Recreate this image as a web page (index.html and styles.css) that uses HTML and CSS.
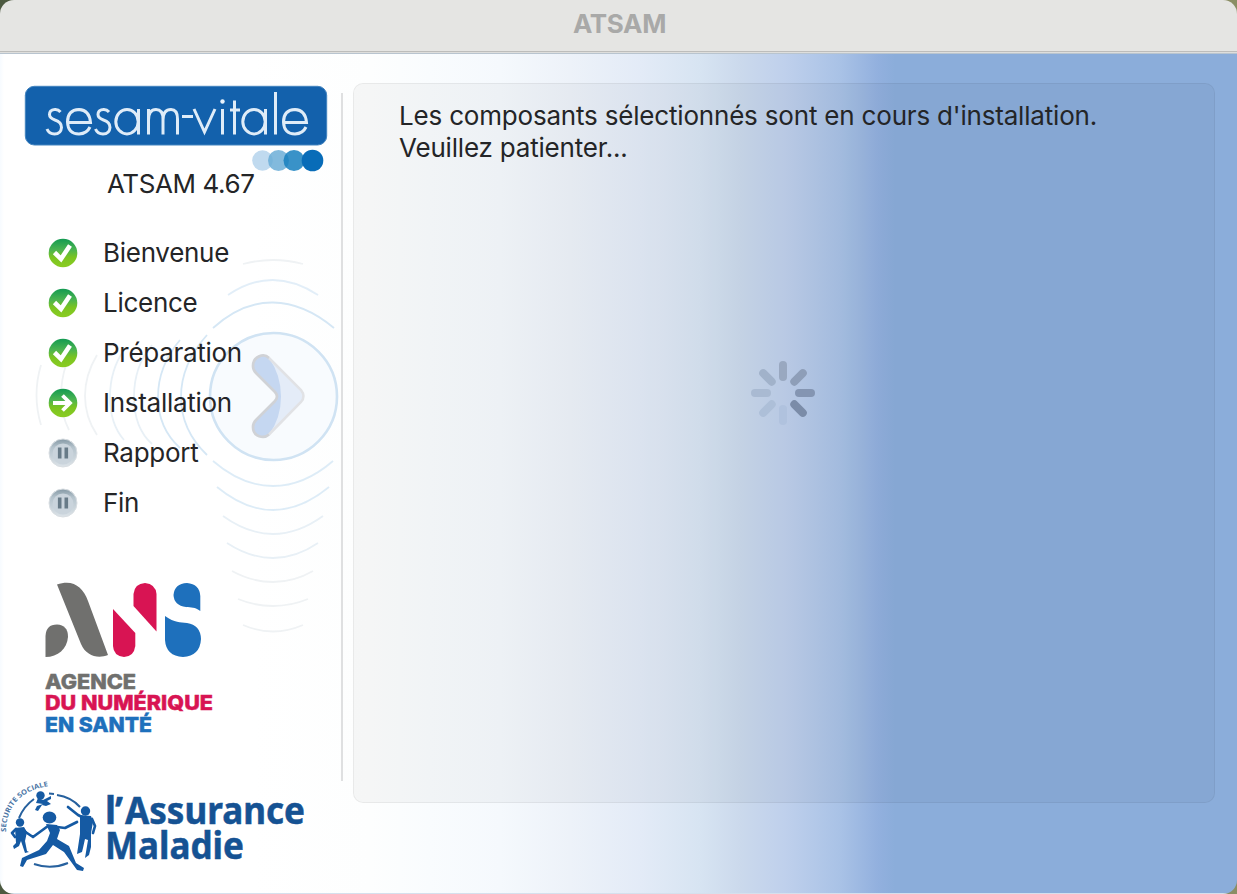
FILE: index.html
```html
<!DOCTYPE html>
<html lang="fr">
<head>
<meta charset="utf-8">
<title>ATSAM</title>
<link rel="stylesheet" href="styles.css">
</head>
<body>
<div class="window">
  <header class="titlebar">ATSAM</header>
  <main class="content">
    <svg class="waves" width="342" height="420" viewBox="0 240 342 420" fill="none" stroke-width="1.8">
      <circle cx="273.500" cy="396.500" r="63.500" fill="#f8fbfe" stroke="#d0e3f3" stroke-width="2.600"/>
      <g stroke="#d5e7f5">
        <path d="M213 328Q242 302 273 302.500T334 328"/>
        <path d="M207 335Q181 364 181 397T207 455"/>
        <path d="M180 340Q158 366 158 397T180 448"/>
        <path d="M228 295Q272 265 318 295" opacity=".7"/>
        <path d="M213 461Q242 486 273 486T333 461" opacity=".8"/>
        <path d="M217 487Q245 510 273 510T329 487" opacity=".8"/>
      </g>
      <g stroke="#e8f0f6">
        <path d="M152 345Q134 366 134 397T152 444"/>
        <path d="M124 350Q110 370 110 397T124 440"/>
        <path d="M223 516Q248 534 273 534T323 516"/>
        <path d="M227 543Q250 558 273 558T318 543"/>
      </g>
      <g stroke="#eff2f4">
        <path d="M97 355Q85 375 85 396T97 435"/>
        <path d="M66 365Q61 380 61 397T69 430"/>
        <path d="M41 365Q32 395 41 425"/>
        <path d="M243 264Q273 256 303 264"/>
        <path d="M232 571Q252 582 273 582T313 571"/>
        <path d="M238 599Q255 606 273 606T308 599"/>
        <path d="M243 625Q273 638 303 625"/>
      </g>
      <path d="M269 358L301 390Q306 396.500 301 402L269 434.500C264 439 253 437 253 427Q253 423 256 420L275 401Q279 396.500 275 392L256 373Q253 370 253 366C253 356 264 353 269 358Z" fill="#e4ecf8"/>
      <path d="M269 358Q281 375 281 396.500Q281 418 269 434.500C264 439 253 437 253 427Q253 423 256 420L275 401Q279 396.500 275 392L256 373Q253 370 253 366C253 356 264 353 269 358Z" fill="#c5d7f1"/>
      <path d="M269 358L301 390Q306 396.500 301 402L269 434.500" stroke="#e1e2e5" stroke-width="2.500"/>
      <path d="M269 434.500C264 439 253 437 253 427Q253 423 256 420L275 401Q279 396.500 275 392L256 373Q253 370 253 366C253 356 264 353 269 358" stroke="#d0d2d6" stroke-width="2.700"/>
    </svg>

    <aside class="sidebar">
      <svg class="sesam" width="304" height="90" viewBox="24 84 304 90">
        <rect x="25.300" y="86.300" width="301.400" height="58.700" rx="9" fill="#1361ac" stroke="#4384bf" stroke-width="1"/>
        <g fill="none" stroke="#dfecf8" stroke-width="3" stroke-linecap="butt">
          <path d="M60.500 112Q58 109 54.500 109.500Q49.500 110 49.500 114.500Q49.500 118 55 120Q61.500 122 61.500 127.500Q61 134 54.500 134Q49 134 47 129"/>
          <path d="M67.500 122.500H90.500Q89.500 110 79 109.500Q67.500 110 67.500 122Q68 134 79 134Q87 133.500 90 127"/>
          <path d="M109 112Q106.500 109 103 109.500Q98 110 98 114.500Q98 118 103.500 120Q110 122 110 127.500Q109.500 134 103 134Q97.500 134 95.500 129"/>
          <ellipse cx="127" cy="121.700" rx="11.200" ry="12.200"/><path d="M138.500 109V134.500"/>
          <path d="M148.500 109V134.500M148.500 120Q148.500 109.500 156 109.500Q163 109.500 163 119V134.500M163 120Q163 109.500 171 109.500Q177.500 109.500 177.500 119V134.500"/>
          <path d="M182 116.500H193M194 109L204.500 132L215 109M222.500 109V134.500M234.500 100.500V134.500M230 110H240"/>
          <ellipse cx="254" cy="121.700" rx="11.200" ry="12.200"/><path d="M265.500 109V134.500M275.500 92V134.500"/>
          <path d="M283.500 122.500H306.500Q305.500 110 295 109.500Q283.500 110 283.500 122Q284 134 295 134Q303 133.500 306 127"/>
        </g>
        <circle cx="222.500" cy="101.500" r="2.200" fill="#e9f2fb"/>
        <circle cx="262.500" cy="160.500" r="10.300" fill="#c0daef"/>
        <circle cx="278.500" cy="160.500" r="10.500" fill="#67abd6" opacity=".82"/>
        <circle cx="294" cy="160.500" r="10.500" fill="#167fbe" opacity=".85"/>
        <circle cx="312.500" cy="160.500" r="10.800" fill="#086cb8"/>
      </svg>
      <div class="version">ATSAM 4.67</div>

      <ul class="steps">
        <li class="step"><svg class="status" viewBox="0 0 30 30"><use href="#done"/></svg><span>Bienvenue</span></li>
        <li class="step"><svg class="status" viewBox="0 0 30 30"><use href="#done"/></svg><span>Licence</span></li>
        <li class="step"><svg class="status" viewBox="0 0 30 30"><use href="#done"/></svg><span>Préparation</span></li>
        <li class="step"><svg class="status" viewBox="0 0 30 30"><use href="#current"/></svg><span>Installation</span></li>
        <li class="step"><svg class="status" viewBox="0 0 30 30"><use href="#waiting"/></svg><span>Rapport</span></li>
        <li class="step"><svg class="status" viewBox="0 0 30 30"><use href="#waiting"/></svg><span>Fin</span></li>
      </ul>

      <svg class="ans" width="180" height="160" viewBox="40 578 180 160">
        <path d="M57 584.500C73 579 83 587 88 601L108 655C98 659 86 656 81 644Z" fill="#70706e"/>
        <path d="M45.500 657V636Q46 624.500 57 624.500Q68 625 68 637C67 649 58 657 45.500 657Z" fill="#70706e"/>
        <path d="M113 609L135.300 633V646Q134 656.500 124 657Q113.500 656 113 646Z" fill="#d81453"/>
        <path d="M133.500 606V594Q134.500 583.500 145 583Q155.500 584 156.500 594V631.500Z" fill="#d81453"/>
        <path d="M200.300 611C195 607 191 607.500 186 607Q174 605.500 173.500 595Q174.500 583.500 187 583Q199.500 584 200.300 596Z" fill="#1e70bc"/>
        <path d="M165 616C175 623 180 622 187 623Q200.500 625 201 639Q200 656 183 657Q166 656 165 640Z" fill="#1e70bc"/>
        <g class="ans-text">
          <text x="45" y="688.500" fill="#70706e" stroke="#70706e" textLength="91" lengthAdjust="spacingAndGlyphs">AGENCE</text>
          <text x="45" y="710" fill="#d81453" stroke="#d81453" textLength="168" lengthAdjust="spacingAndGlyphs">DU NUMÉRIQUE</text>
          <text x="45" y="731.500" fill="#1e70bc" stroke="#1e70bc" textLength="107" lengthAdjust="spacingAndGlyphs">EN SANTÉ</text>
        </g>
      </svg>

      <svg class="assurance" width="312" height="104" viewBox="0 774 312 104">
        <defs><path id="ring" d="M6 832C6 806 21 789 53 785.500"/></defs>
        <text class="ring-text" fill="#4a75a5"><textPath href="#ring" textLength="69" lengthAdjust="spacingAndGlyphs">SECURITE SOCIALE</textPath></text>
        <g fill="none" stroke="#27619e" stroke-width="2">
          <path d="M19 818Q24 806 34 799M49 793.500L54 794M57 795Q71 797 80 807M34 864Q51 870 68 863"/>
        </g>
        <g fill="#155aa3">
          <circle cx="40.500" cy="795.500" r="4.200"/>
          <path d="M38 798L43 800L51 796L51 799L47 801L51 804L46 806L42 805L38 811L35 810L37 806L43 804L36 803Z"/>
          <ellipse cx="49.500" cy="817.500" rx="6.800" ry="6"/>
          <circle cx="20" cy="822.500" r="4.200"/>
          <circle cx="85.500" cy="811" r="4.700"/>
          <path d="M46 824L57 825L60 830L57 839L69 846L76 863L84 868L83 871L77 870L64 852L53 845L46 854L27 860L23 867L20 866L22 858L39 850L47 841L50 833Z"/>
          <path d="M15 828L24 827L27 832L25 841L27 851L29 852L25 853L21 841L19 846L14 849L13 846L16 843Z"/>
          <path d="M80 815L91 816L93 822L91 833L91 847L89 855L85 858L88 840L85 839L83 848L82 852L77 854L80 834Z"/>
        </g>
        <g fill="none" stroke="#155aa3" stroke-linecap="round" stroke-linejoin="round" stroke-width="2.700">
          <path d="M48 826L33 837L24 831M57 827L65 828L77 822M16 829L12 833L15 837M82 817L78 815L68 807M92 819L95 826L93 833"/>
        </g>
        <g class="assurance-text">
          <text y="824"><tspan x="105">l</tspan><tspan x="115">’</tspan><tspan x="125" textLength="180" lengthAdjust="spacingAndGlyphs">Assurance</tspan></text>
          <text x="105" y="858.500" textLength="139" lengthAdjust="spacingAndGlyphs">Maladie</text>
        </g>
      </svg>
    </aside>

    <div class="divider"></div>

    <section class="panel">
      <p class="message">Les composants sélectionnés sont en cours d'installation.<br>Veuillez patienter...</p>
      <svg class="spinner" width="64" height="64" viewBox="-32 -32 64 64" stroke-width="8" stroke-linecap="round">
        <path d="M0-28V-16" stroke="#99a8c0"/>
        <path d="M0-28V-16" stroke="#8e9eb8" transform="rotate(45)"/>
        <path d="M0-28V-16" stroke="#8495b2" transform="rotate(90)"/>
        <path d="M0-28V-16" stroke="#7b8ca8" transform="rotate(135)"/>
        <path d="M0-28V-16" stroke="#b0c2de" transform="rotate(180)"/>
        <path d="M0-28V-16" stroke="#adbfd8" transform="rotate(225)"/>
        <path d="M0-28V-16" stroke="#a9bad2" transform="rotate(270)"/>
        <path d="M0-28V-16" stroke="#a1b2ca" transform="rotate(315)"/>
      </svg>
    </section>
  </main>
</div>

<svg class="symbols" width="0" height="0">
  <defs>
    <linearGradient id="green" x2="0" y2="1"><stop stop-color="#139a52"/><stop offset=".4" stop-color="#4db550"/><stop offset=".65" stop-color="#7ac421"/><stop offset="1" stop-color="#8bcc22"/></linearGradient>
    <linearGradient id="grey" x2="0" y2="1"><stop stop-color="#8498a4"/><stop offset=".3" stop-color="#b5c3cc"/><stop offset="1" stop-color="#dce3e8"/></linearGradient>
    <g id="done"><circle cx="15" cy="15" r="14.300" fill="url(#green)"/><path d="M6.500 14.500L13 21L22 7.500" fill="none" stroke="#fff" stroke-width="4.600"/></g>
    <g id="current"><circle cx="15" cy="15" r="14.300" fill="url(#green)"/><path d="M5 15H22M14.500 7.500L22 15L14.500 22.500" fill="none" stroke="#fff" stroke-width="3.800"/></g>
    <g id="waiting"><circle cx="15" cy="15" r="14" fill="url(#grey)" stroke="#d9dee2"/><circle cx="15" cy="16" r="10.500" fill="#cad4dc"/><path d="M11.700 9.500V20.500M18.300 9.500V20.500" stroke="#687b88" stroke-width="3.600"/></g>
  </defs>
</svg>
</body>
</html>
```

FILE: styles.css
```css
* { box-sizing: border-box; }

body {
  margin: 0;
  background: linear-gradient(90deg, #4c5940, #8b8e65);
  font-family: Inter, "Liberation Sans", sans-serif;
  color: #242527;
}

.window {
  display: flex;
  flex-direction: column;
  width: 1237px;
  height: 894px;
  overflow: hidden;
  border-radius: 14px;
}

.titlebar {
  flex: 0 0 54px;
  padding-top: 8px;
  text-align: center;
  font-size: 26px;
  line-height: 32px;
  font-weight: 700;
  letter-spacing: -.3px;
  text-indent: 2px;
  color: #a9a9a8;
  background: #e5e5e3;
  border-bottom: 1px solid #b8c4cf;
  box-shadow: inset 0 -1px #dededc, inset 0 -2px #bdbdbb;
}

.content {
  position: relative;
  flex: 1;
  display: flex;
  border-bottom: 1px solid #d5e0ed;
  background: linear-gradient(90deg, #f7fbff 0, #fff 4px, #fff 250px, #fdfefe 370px, #f9fcfe 430px, #f5f9fd 500px, #edf2f9 570px, #e3ebf7 640px, #d7e4f2 700px, #cbd9ec 740px, #bfd0ec 785px, #a9c2e6 840px, #92b0de 878px, #8badda 895px, #8badda 100%);
}

.waves {
  position: absolute;
  left: 0;
  top: 186px;
}

.sidebar {
  position: relative;
  width: 341px;
  display: flex;
  flex-direction: column;
  align-items: flex-start;
}

.sesam { margin: 30px 0 0 24px; }

.version {
  margin: -6px 0 0 107px;
  font-size: 26px;
  line-height: 32px;
  letter-spacing: -.4px;
  white-space: nowrap;
}

.steps {
  list-style: none;
  margin: 28px 0 0;
  padding: 0 0 0 48px;
}

.step {
  display: flex;
  align-items: center;
  gap: 25px;
  height: 50px;
  font-size: 26px;
  line-height: 32px;
  letter-spacing: -.28px;
}

.status { width: 30px; height: 30px; }

.ans { margin: 50px 0 0 40px; }

.ans-text {
  font-family: Inter, sans-serif;
  font-weight: 800;
  font-size: 20.500px;
  stroke-width: .5px;
}

.assurance { margin-top: 36px; }

.ring-text { font-size: 7px; font-weight: 700; font-family: "Open Sans", sans-serif; }

.assurance-text {
  font-family: "Noto Sans", sans-serif;
  font-weight: 700;
  font-size: 37px;
  fill: #155293;
  stroke: #155293;
  stroke-width: .5px;
}

.divider {
  width: 2px;
  height: 688px;
  margin-top: 39px;
  background: #dfe0e1;
}

.panel {
  display: flex;
  flex-direction: column;
  width: 862px;
  height: 720px;
  margin: 29px 0 0 10px;
  padding: 16px 45px 0;
  border: 1px solid rgba(0, 0, 0, .055);
  border-radius: 10px;
  background: rgba(0, 0, 0, .03);
}

.message {
  margin: 0;
  font-size: 26px;
  line-height: 32px;
  letter-spacing: -.19px;
  white-space: nowrap;
}

.spinner { margin: 197px 0 0 352px; }

.symbols { position: absolute; }
```
